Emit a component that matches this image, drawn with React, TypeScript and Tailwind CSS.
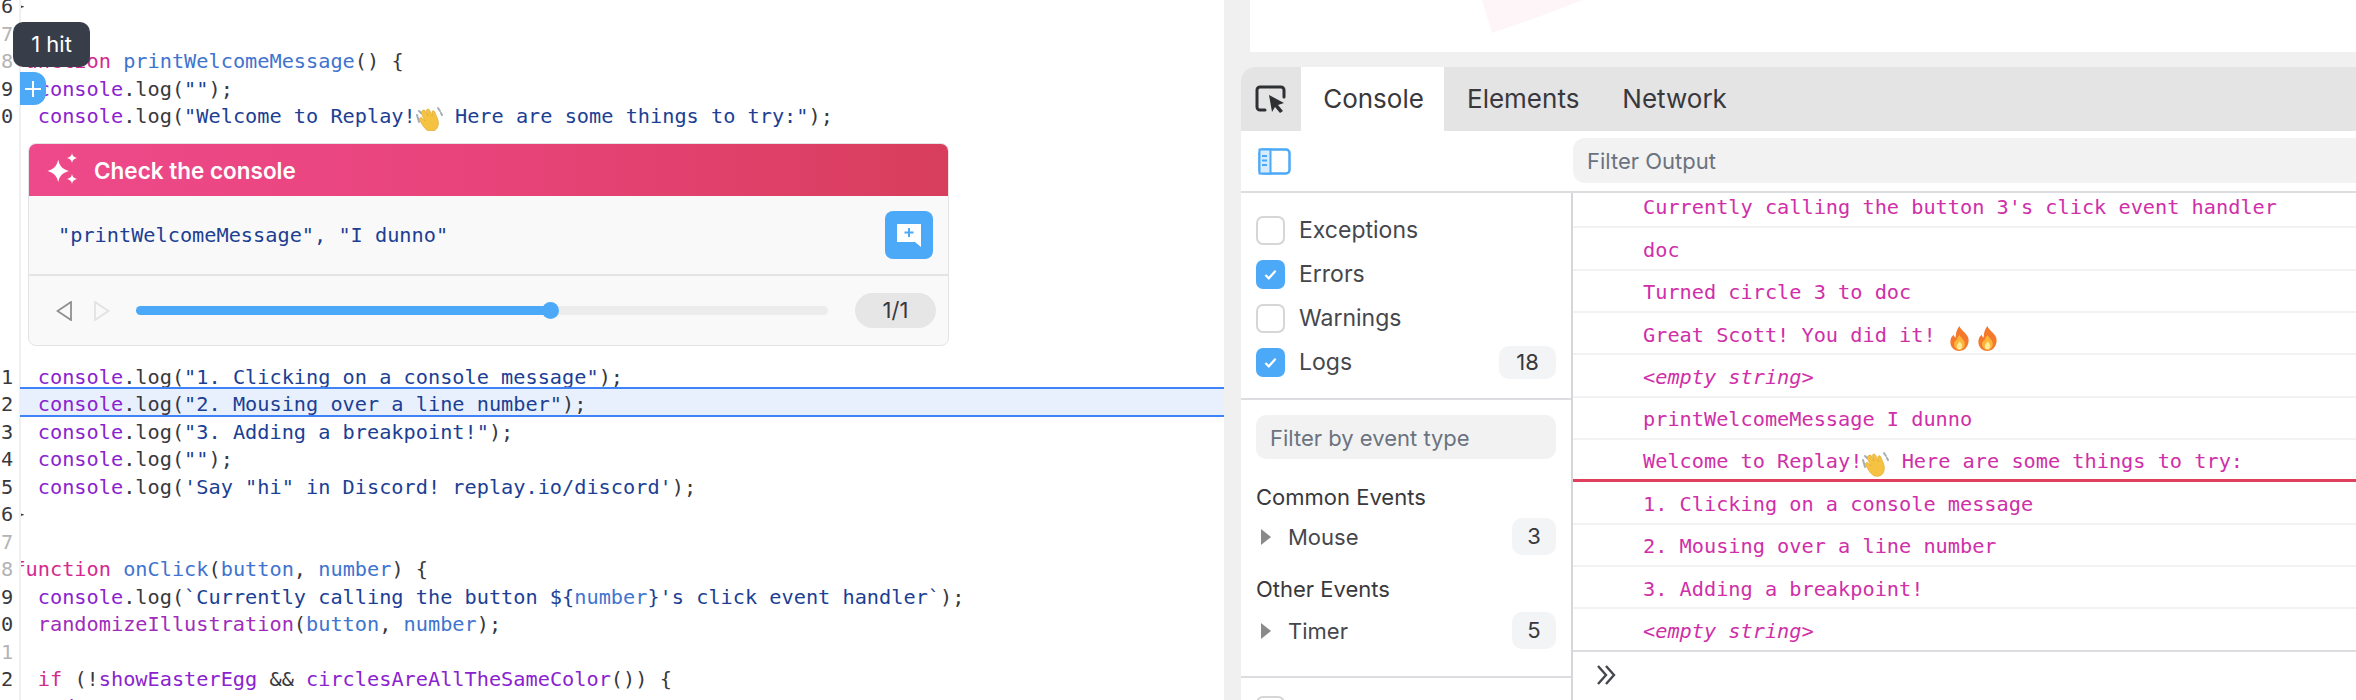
import type { ReactNode } from "react";

const mono = "font-['DejaVu_Sans_Mono',monospace]";
const ui = "font-['Inter',sans-serif]";

function Wave({ className }: { className?: string }) {
  return (
    <svg viewBox="2 2 27 27" className={className}>
      <path d="M3 10l2 7M5 6l2 2M24 3l2 3M27 8l1 2" stroke="#a9adb3" strokeWidth="2" fill="none" strokeLinecap="round" />
      <path
        d="M8 6c1-1.500 3-1 3.500.3L14 11l-1.500-5c-.5-1.800 2-2.800 3-1l3 6.500-.6-4c-.3-1.800 2-2.500 2.800-.8l2.500 6c1.800 4.500 1.500 8-.5 11-2.500 3-7 3.500-10 1.300-2.500-1.800-5-6-7-10-1-2 1-3.200 2.300-2L11 16 7.500 9C7 8 7.400 7 8 6z"
        fill="#f5c242"
        stroke="#dba52c"
        strokeWidth="0.6"
      />
    </svg>
  );
}

function Fire() {
  return (
    <svg viewBox="0 0 24 26" className="mb-[-4px] inline-block h-[25px] w-[23px]">
      <path d="M12 0c1 4 7 7 9 12 2 6-2 14-9 14S1 20 3 13c.7-2 2-3 3-4 .2 1.500.8 2.500 2 3C8 7 9.500 3 12 0z" fill="#f4792b" />
      <path d="M12 9c1 3 5 5 5.500 9 .4 4-2.500 7-5.500 7s-6-3-5.500-7c.3-2 1.500-3 2.500-3.500C9.500 12 11 11 12 9z" fill="#fbb63c" />
      <path d="M12 16c1.500 1.500 3 3 2.800 5-.2 2-1.500 3.500-2.800 3.500s-3-1.500-2.800-3.500c.2-2 1.800-3 2.800-5z" fill="#fdeb9a" />
    </svg>
  );
}

const K = ({ children }: { children: ReactNode }) => <span className="text-[#d4298f]">{children}</span>;
const F = ({ children }: { children: ReactNode }) => <span className="text-[#3f74cf]">{children}</span>;
const P = ({ children }: { children: ReactNode }) => <span className="text-[#8a23cf]">{children}</span>;
const S = ({ children }: { children: ReactNode }) => <span className="text-[#1c3f94]">{children}</span>;

function Log({ children }: { children: ReactNode }) {
  return (
    <>
      {"  "}
      <P>console</P>.log({children});
    </>
  );
}

function CodeLine({ n, dim, active, children }: { n: number; dim?: boolean; active?: boolean; children?: ReactNode }) {
  return (
    <div className="relative flex h-[27.5px] items-center pt-[1px]">
      {active && <div className="absolute left-[20px] right-0 -top-[3px] h-[30px] bg-[#e8f0fd] border-y-2 border-[#3f83f8]" />}
      <div className={`relative w-[21px] shrink-0 pl-[1px] ${dim ? "text-[#b4b4b4]" : "text-[#38383d]"}`}>{n}</div>
      <div className="relative min-w-0 flex-1 overflow-hidden">
        <div className="-ml-[7.6px] whitespace-pre text-[#38383d]">{children ?? " "}</div>
      </div>
    </div>
  );
}

function CheckRow({ label, checked, count }: { label: string; checked?: boolean; count?: string }) {
  return (
    <div className="flex h-[44px] items-center pl-[15px] pr-[15px]">
      {checked ? (
        <div className="flex h-[29px] w-[29px] items-center justify-center rounded-[7px] bg-[#4ba9f7]">
          <svg viewBox="0 0 20 20" className="h-[17px] w-[17px]">
            <path d="M4 10.500l4 4 8-9" fill="none" stroke="#fff" strokeWidth="2.600" />
          </svg>
        </div>
      ) : (
        <div className="h-[29px] w-[29px] rounded-[7px] border-2 border-[#d6d6d6] bg-white" />
      )}
      <span className="ml-[14px] flex-1 text-[23px] text-[#45474d]">{label}</span>
      {count && <span className="flex h-[33px] w-[57px] items-center justify-center rounded-[10px] bg-[#f3f4f6] text-[22px] text-[#38383d]">{count}</span>}
    </div>
  );
}

function EventRow({ label, count }: { label: string; count: string }) {
  return (
    <div className="flex h-[37px] items-center pl-[5px]">
      <svg viewBox="0 0 10 16" className="h-[16px] w-[10px] shrink-0">
        <path d="M0 0l10 8-10 8z" fill="#8a8a8a" />
      </svg>
      <span className="ml-[17px] flex-1 pt-[2px] text-[22px] text-[#45474d]">{label}</span>
      <span className="flex h-[37px] w-[44px] items-center justify-center rounded-[10px] bg-[#f3f4f6] text-[22px] text-[#38383d]">{count}</span>
    </div>
  );
}

function Msg({ children, italic, red }: { children: ReactNode; italic?: boolean; red?: boolean }) {
  return (
    <div className={`flex h-[42.35px] shrink-0 items-center pl-[70px] pt-[3px] text-[#cf2fa8] ${italic ? "italic" : ""} ${red ? "border-b-[3px] border-[#e0405e]" : "border-b-2 border-[#f2f2f2]"}`}>
      <span className="whitespace-pre">{children}</span>
    </div>
  );
}

export default function App() {
  return (
    <div className={`flex h-[700px] w-[2356px] overflow-hidden bg-white ${ui}`}>
      {/* Source viewer */}
      <div className={`relative w-[1224px] shrink-0 overflow-hidden text-[20.25px] ${mono}`}>
        <div className="absolute bottom-0 left-[19px] top-0 w-[2px] bg-[#f0f0f0]" />
        <div className="relative -mt-[8px]">
          <CodeLine n={6}>{"}"}</CodeLine>
          <CodeLine n={7} dim />
          <CodeLine n={8} dim>
            <K>function</K> <F>printWelcomeMessage</F>() {"{"}
          </CodeLine>
          <CodeLine n={9}>
            <Log>
              <S>""</S>
            </Log>
          </CodeLine>
          <CodeLine n={0}>
            {"  "}
            <P>console</P>.log(
            <S>
              "Welcome to Replay!
              <Wave className="mb-[-5px] inline-block h-[29px] w-[27px]" />
              {" "}Here are some things to try:"
            </S>
            );
          </CodeLine>

          {/* Print statement panel */}
          <div className={`ml-[28px] mt-[13px] mb-[17px] w-[921px] overflow-hidden rounded-[8px] border border-[#e4e4e7] bg-[#f9f9f9] ${mono}`}>
            <div className={`flex h-[52px] items-center bg-gradient-to-r from-[#ee4a8b] via-[#e8437a] to-[#d83e5c] pl-[16px] ${ui}`}>
              <svg viewBox="0 0 34 34" className="h-[34px] w-[34px]">
                <path d="M12 4c1 5 3 7 8 8.500-5 1.500-7 3.500-8 8.500-1-5-3-7-8-8.500 5-1.500 7-3.500 8-8.500z" transform="translate(-3 1) scale(1.350)" fill="#fff" />
                <path d="M27 0c.5 3 1.800 4.300 5 5-3.200.7-4.500 2-5 5-.5-3-1.800-4.300-5-5 3.200-.7 4.500-2 5-5zM27 21c.5 3 1.800 4.300 5 5-3.200.7-4.500 2-5 5-.5-3-1.800-4.300-5-5 3.200-.7 4.500-2 5-5z" fill="#fff" />
              </svg>
              <span className="ml-[15px] pt-[2px] text-[22.5px] font-semibold text-white">Check the console</span>
            </div>
            <div className="flex h-[80px] items-center justify-between border-b-2 border-[#e4e4e7] pl-[29px] pr-[15px]">
              <span className="pt-[1px] text-[#1c3f94]">"printWelcomeMessage", "I dunno"</span>
              <div className="flex h-[48px] w-[48px] items-center justify-center rounded-[8px] bg-[#4ba9f7]">
                <svg viewBox="0 0 26 24" className="h-[24px] w-[26px]">
                  <path d="M1 1h24v23l-6-5H1z" fill="#fff" />
                  <path d="M13 5v9M8.500 9.500h9" stroke="#4ba9f7" strokeWidth="2" />
                </svg>
              </div>
            </div>
            <div className={`flex h-[69px] items-center pl-[27px] pr-[11px] pt-[1px] ${ui}`}>
              <svg viewBox="0 0 16 20" className="h-[20px] w-[16px] shrink-0">
                <path d="M15 1L1.500 10 15 19z" fill="none" stroke="#8e8e8e" strokeWidth="1.800" />
              </svg>
              <svg viewBox="0 0 16 20" className="ml-[22px] h-[20px] w-[16px] shrink-0">
                <path d="M1 1l13.500 9L1 19z" fill="none" stroke="#e2e2e2" strokeWidth="1.800" />
              </svg>
              <div className="relative ml-[26px] h-[9px] w-[692px] rounded-full bg-[#ececec]">
                <div className="h-full w-[414px] rounded-full bg-[#4ba9f7]" />
                <div className="absolute left-[406px] top-[-4px] h-[17px] w-[17px] rounded-full bg-[#4ba9f7]" />
              </div>
              <span className="ml-[27px] flex h-[35px] w-[81px] items-center justify-center rounded-full bg-[#e6e6e6] text-[22px] text-[#38383d]">1/1</span>
            </div>
          </div>

          <CodeLine n={1}>
            <Log>
              <S>"1. Clicking on a console message"</S>
            </Log>
          </CodeLine>
          <CodeLine n={2} active>
            <Log>
              <S>"2. Mousing over a line number"</S>
            </Log>
          </CodeLine>
          <CodeLine n={3}>
            <Log>
              <S>"3. Adding a breakpoint!"</S>
            </Log>
          </CodeLine>
          <CodeLine n={4}>
            <Log>
              <S>""</S>
            </Log>
          </CodeLine>
          <CodeLine n={5}>
            <Log>
              <S>'Say "hi" in Discord! replay.io/discord'</S>
            </Log>
          </CodeLine>
          <CodeLine n={6}>{"}"}</CodeLine>
          <CodeLine n={7} dim />
          <CodeLine n={8} dim>
            <K>function</K> <F>onClick</F>(<F>button</F>, <F>number</F>) {"{"}
          </CodeLine>
          <CodeLine n={9}>
            <Log>
              <S>`Currently calling the button ${"{"}</S>
              <F>number</F>
              <S>{"}"}'s click event handler`</S>
            </Log>
          </CodeLine>
          <CodeLine n={0}>
            {"  "}
            <span className="text-[#a02cbb]">randomizeIllustration</span>(<F>button</F>, <F>number</F>);
          </CodeLine>
          <CodeLine n={1} dim />
          <CodeLine n={2}>
            {"  "}
            <K>if</K> (!<P>showEasterEgg</P> && <P>circlesAreAllTheSameColor</P>()) {"{"}
          </CodeLine>
          <CodeLine n={3}>
            {"    "}
            <P>document</P>
          </CodeLine>
        </div>

        {/* Hit count tooltip and add-print button */}
        <div className={`absolute left-[13px] top-[22px] flex h-[45px] w-[77px] items-center justify-center rounded-[10px] bg-[#383d4a] text-[22px] text-white ${ui}`}>1 hit</div>
        <div className="absolute left-[20px] top-[72px] flex h-[33px] w-[26px] items-center justify-center rounded-r-[12px] bg-[#4ba9f7]">
          <svg viewBox="0 0 18 18" className="h-[18px] w-[18px]">
            <path d="M9 1v16M1 9h16" stroke="#fff" strokeWidth="2" />
          </svg>
        </div>
      </div>

      {/* Right column */}
      <div className="flex min-w-0 flex-1 flex-col bg-[#f0f0f0] pl-[17px]">
        <div className="relative ml-[9px] h-[52px] shrink-0 overflow-hidden bg-white">
          <svg viewBox="0 0 101 34" className="absolute left-[232px] top-0 h-[34px] w-[101px]">
            <path d="M0 0H101L48 20 10 33z" fill="#fdf5f7" />
          </svg>
        </div>

        {/* DevTools */}
        <div className="mt-[15px] flex min-h-0 flex-1 flex-col overflow-hidden rounded-tl-[14px] bg-white">
          <div className="flex h-[64px] shrink-0 bg-[#e4e4e4] text-[26px] text-[#38383d]">
            <div className="flex w-[60px] items-center justify-center">
              <svg viewBox="0 0 32 28" className="h-[28px] w-[32px]">
                <path d="M10 25H5a3 3 0 0 1-3-3V5a3 3 0 0 1 3-3h21a3 3 0 0 1 3 3v7" fill="none" stroke="#2f3033" strokeWidth="3" strokeLinecap="round" />
                <path d="M14 10l15 8-6 2 5 6-3 2-5-6-3 5z" fill="#2f3033" />
              </svg>
            </div>
            <div className="flex w-[143px] items-center justify-center bg-white pb-[2px] pl-[2px]">Console</div>
            <div className="ml-[23px] flex items-center pb-[2px]">Elements</div>
            <div className="ml-[43px] flex items-center pb-[2px]">Network</div>
          </div>

          <div className="flex h-[62px] shrink-0 border-b-2 border-[#dcdde1]">
            <div className="flex w-[332px] items-center pl-[17px]">
              <svg viewBox="0 0 33 27" className="h-[27px] w-[33px]">
                <rect x="1.500" y="1.500" width="30" height="24" rx="3.500" fill="#fff" stroke="#4ba9f7" strokeWidth="2.500" />
                <rect x="1.500" y="1.500" width="11" height="24" fill="#d6ebfd" stroke="#4ba9f7" strokeWidth="2" />
                <path d="M4 8h5M4 12.500h5M4 17h5" stroke="#4ba9f7" strokeWidth="1.800" />
              </svg>
            </div>
            <div className="mt-[7px] flex h-[45px] flex-1 items-center rounded-l-[12px] bg-[#f2f2f2] pl-[14px] pt-[2px] text-[22px] text-[#6b7280]">Filter Output</div>
          </div>

          <div className="flex min-h-0 flex-1">
            {/* Sidebar */}
            <div className="w-[332px] shrink-0 overflow-hidden border-r-2 border-[#d5d6da]">
              <div className="border-b-2 border-[#dcdde1] pb-[14px] pt-[15px]">
                <CheckRow label="Exceptions" />
                <CheckRow label="Errors" checked />
                <CheckRow label="Warnings" />
                <CheckRow label="Logs" checked count="18" />
              </div>
              <div className="border-b-2 border-[#dcdde1] px-[15px] pb-[27px] pt-[15px]">
                <div className="flex h-[44px] items-center rounded-[10px] bg-[#f2f2f2] pl-[14px] pt-[2px] text-[22px] text-[#6b7280]">Filter by event type</div>
                <div className="mt-[24px] flex h-[28px] items-center text-[22px] text-[#38383d]">Common Events</div>
                <div className="mt-[7px]">
                  <EventRow label="Mouse" count="3" />
                </div>
                <div className="mt-[20px] flex h-[28px] items-center text-[22px] text-[#38383d]">Other Events</div>
                <div className="mt-[9px]">
                  <EventRow label="Timer" count="5" />
                </div>
              </div>
              <div className="pl-[15px] pt-[18px]">
                <div className="h-[29px] w-[29px] rounded-[7px] border-2 border-[#d6d6d6] bg-white" />
              </div>
            </div>

            {/* Console messages */}
            <div className={`flex min-w-0 flex-1 flex-col overflow-hidden text-[20.25px] ${mono}`}>
              <div className="-mt-[7px] flex flex-col">
                <Msg>Currently calling the button 3's click event handler</Msg>
                <Msg>doc</Msg>
                <Msg>Turned circle 3 to doc</Msg>
                <Msg>
                  Great Scott! You did it! <Fire />
                  <span className="inline-block w-[5px]" />
                  <Fire />
                </Msg>
                <Msg italic>{"<empty string>"}</Msg>
                <Msg>printWelcomeMessage I dunno</Msg>
                <Msg red>
                  Welcome to Replay!
                  <Wave className="mb-[-5px] inline-block h-[29px] w-[27px]" />
                  {" "}Here are some things to try:
                </Msg>
                <Msg>1. Clicking on a console message</Msg>
                <Msg>2. Mousing over a line number</Msg>
                <Msg>3. Adding a breakpoint!</Msg>
                <Msg italic>{"<empty string>"}</Msg>
              </div>
              <div className="-mt-[2px] flex flex-1 items-start border-t-2 border-[#dcdde1] pl-[22px] pt-[12px]">
                <svg viewBox="0 0 22 22" className="h-[22px] w-[22px]">
                  <path d="M3 2l8 9-8 9M11 2l8 9-8 9" fill="none" stroke="#45474d" strokeWidth="2.400" />
                </svg>
              </div>
            </div>
          </div>
        </div>
      </div>
    </div>
  );
}
